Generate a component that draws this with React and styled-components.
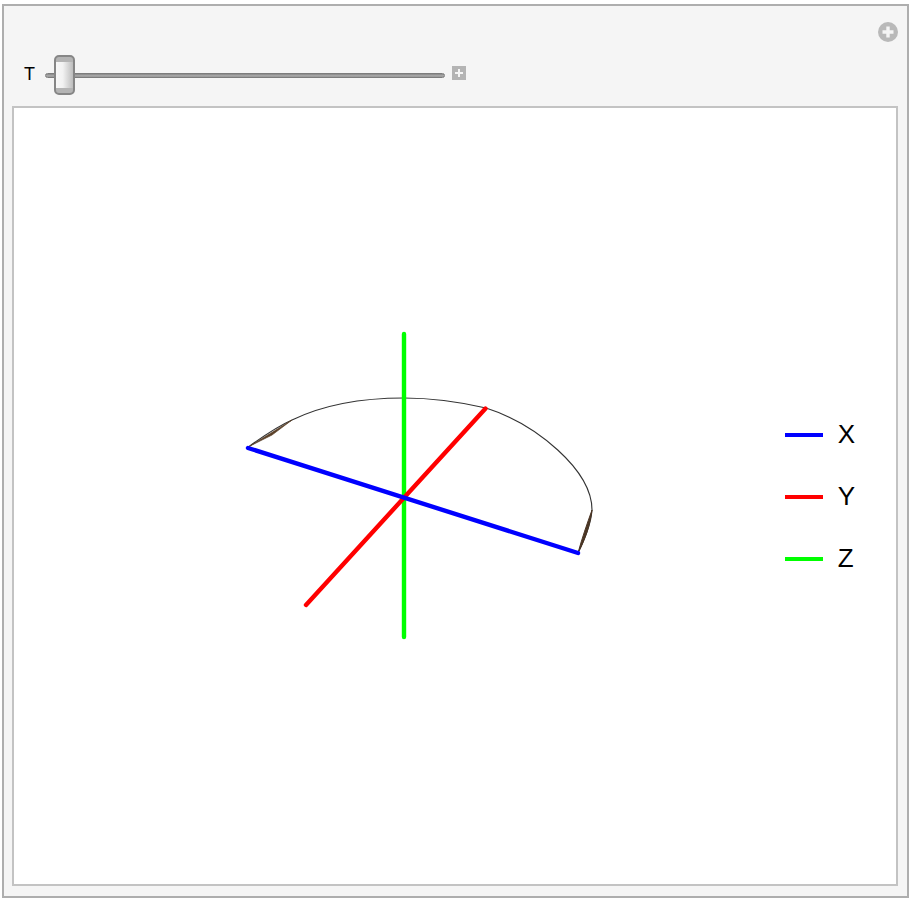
import React from "react";
import styled, { createGlobalStyle } from "styled-components";

const Global = createGlobalStyle`
  html, body { margin: 0; padding: 0; background: #fff; }
  body { font-family: "Liberation Sans", Arial, sans-serif; }
`;

const Frame = styled.div`
  box-sizing: border-box;
  width: 907px;
  height: 894px;
  margin: 4px 0 0 2px;
  background: #f5f5f5;
  border: 2px solid #aeaeae;
  padding: 16px 9px 10px 8px;
  display: flex;
  flex-direction: column;
`;

const TopBar = styled.div`
  display: flex;
  justify-content: flex-end;
  height: 20px;
`;

const ControlRow = styled.div`
  display: flex;
  align-items: center;
  height: 40px;
  margin-top: 11px;
  margin-bottom: 13px;
  padding-left: 12px;
`;

const Label = styled.span`
  font-size: 18px;
  line-height: 20px;
  color: #000;
  width: 21px;
  margin-top: 2px;
`;

const Track = styled.div`
  position: relative;
  width: 400px;
  height: 5px;
  margin-top: 5px;
  box-sizing: border-box;
  border-radius: 3px;
  background: linear-gradient(#808080, #a8a8a8 40%, #9a9a9a);
  border: 1px solid #7d7d7d;
`;

const Thumb = styled.div`
  position: absolute;
  left: 8px;
  top: -19px;
  box-sizing: border-box;
  width: 21px;
  height: 40px;
  border-radius: 5px;
  border: 2px solid #868686;
  background:
    linear-gradient(#b4b4b4 0 5px, transparent 5px calc(100% - 5px), #b4b4b4 calc(100% - 5px)),
    linear-gradient(90deg, #f8f8f8, #f2f2f2 40%, #bdbdbd);
`;

const StepButton = styled.div`
  width: 14px;
  height: 14px;
  margin-left: 7px;
  display: flex;
`;

const Plot = styled.div`
  flex: 1;
  min-height: 0;
  display: grid;
  background: #fff;
  border: 2px solid #c3c3c3;
  & > * { grid-area: 1 / 1; }
`;

const Chart = styled.svg`
  display: block;
  width: 884px;
  height: 776px;
`;

const Legend = styled.ul`
  list-style: none;
  margin: 1px 43px 0 0;
  padding: 0;
  justify-self: end;
  align-self: center;
  display: flex;
  flex-direction: column;
  gap: 33px;
`;

const LegendRow = styled.li`
  display: flex;
  align-items: center;
  height: 29px;
  gap: 15px;
  font-size: 26px;
  color: #000;
`;

const Swatch = styled.span`
  width: 38px;
  height: 4px;
  background: ${(p) => p.$color};
`;

const CirclePlus = () => (
  <svg width="20" height="20" viewBox="0 0 20 20">
    <circle cx="10" cy="10" r="10" fill="#b9b9b9" />
    <path d="M10 4.5v11M4.5 10h11" stroke="#f5f5f5" strokeWidth="3.4" />
  </svg>
);

const SquarePlus = () => (
  <svg width="14" height="14" viewBox="0 0 14 14">
    <rect width="14" height="14" fill="#b4b4b4" />
    <path d="M7 3v8M3 7h8" stroke="#f5f5f5" strokeWidth="2" />
  </svg>
);

const ARC = "M247 448 C262 437 276 427 292 420 C325 404 365 398 404 398 C432 398 460 402 486 408 C536 424 592 470 592 510 C591 525 584 540 578 553";

export default function App() {
  return (
    <>
      <Global />
      <Frame>
        <TopBar>
          <CirclePlus />
        </TopBar>
        <ControlRow>
          <Label>T</Label>
          <Track>
            <Thumb />
          </Track>
          <StepButton>
            <SquarePlus />
          </StepButton>
        </ControlRow>
        <Plot>
          <Chart viewBox="14 108 884 776">
            <path d={ARC} fill="none" stroke="#333" strokeWidth="1.1" />
            <path d="M250 446 L292 420 L272 435Z" fill="#5a4028" stroke="#5a4028" strokeWidth="0.7" />
            <path d="M592 510 C590 525 585 540 578 553 C582 538 587 524 592 510Z" fill="#4a3524" stroke="#4a3524" strokeWidth="1" />
            <g fill="none" strokeWidth="4.4" strokeLinecap="round">
              <path d="M404 334V637" stroke="#00ff00" />
              <path d="M306 605L485.5 408.5" stroke="#ff0000" />
              <path d="M248 448L578 553" stroke="#0000ff" />
            </g>
          </Chart>
          <Legend>
            <LegendRow><Swatch $color="#0000ff" />X</LegendRow>
            <LegendRow><Swatch $color="#ff0000" />Y</LegendRow>
            <LegendRow><Swatch $color="#00ff00" />Z</LegendRow>
          </Legend>
        </Plot>
      </Frame>
    </>
  );
}
